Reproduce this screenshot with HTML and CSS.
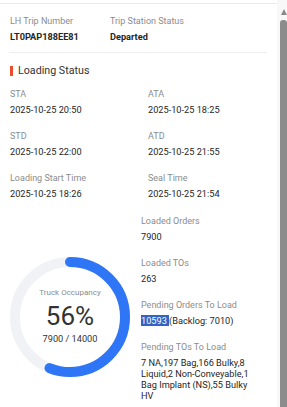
FILE: index.html
```html
<!DOCTYPE html>
<html>
<head>
<meta charset="utf-8">
<link rel="stylesheet" href="styles.css">
</head>
<body>
<div class="frame">
  <div class="panel">
    <div class="head">
      <div class="field head-first">
        <div class="label">LH Trip Number</div>
        <div class="value bold">LT0PAP188EE81</div>
      </div>
      <div class="field">
        <div class="label">Trip Station Status</div>
        <div class="value bold">Departed</div>
      </div>
    </div>
    <div class="divider"></div>
    <div class="title"><span class="mark"></span>Loading Status</div>
    <div class="grid">
      <div class="field"><div class="label">STA</div><div class="value">2025-10-25 20:50</div></div>
      <div class="field"><div class="label">ATA</div><div class="value">2025-10-25 18:25</div></div>
      <div class="field"><div class="label">STD</div><div class="value">2025-10-25 22:00</div></div>
      <div class="field"><div class="label">ATD</div><div class="value">2025-10-25 21:55</div></div>
      <div class="field"><div class="label">Loading Start Time</div><div class="value">2025-10-25 18:26</div></div>
      <div class="field"><div class="label">Seal Time</div><div class="value">2025-10-25 21:54</div></div>
    </div>
    <div class="bottom">
      <div class="gauge">
        <svg class="ring" width="120" height="120" viewBox="0 0 120 120">
          <circle cx="60" cy="60" r="55" fill="none" stroke="#f0f2f6" stroke-width="10"/>
          <circle cx="60" cy="60" r="55" fill="none" stroke="#2f76f6" stroke-width="10" stroke-linecap="round" stroke-dasharray="193.5 400" transform="rotate(-90 60 60)"/>
        </svg>
        <div class="gauge-text">
          <div class="g-label">Truck Occupancy</div>
          <div class="g-pct">56%</div>
          <div class="g-count">7900 / 14000</div>
        </div>
      </div>
      <div class="stats">
        <div class="field"><div class="label">Loaded Orders</div><div class="value">7900</div></div>
        <div class="field"><div class="label">Loaded TOs</div><div class="value">263</div></div>
        <div class="field"><div class="label">Pending Orders To Load</div><div class="value"><span class="sel">10593 </span>(Backlog: 7010)</div></div>
        <div class="field"><div class="label">Pending TOs To Load</div><div class="value wrap">7 NA,197 Bag,166 Bulky,8 Liquid,2 Non-Conveyable,1 Bag Implant (NS),55 Bulky HV</div></div>
      </div>
    </div>
  </div>
  <div class="scrollbar">
    <div class="arrow"></div>
    <div class="thumb"></div>
  </div>
</div>
</body>
</html>
```
FILE: styles.css
```css
html, body {
  margin: 0;
  padding: 0;
  background: #fff;
}
body {
  font-family: Roboto, "Noto Sans", Arial, sans-serif;
  color: #262626;
  width: 287px;
  height: 407px;
  overflow: hidden;
}
.frame {
  display: flex;
  height: 407px;
}
.panel {
  flex: 1;
  margin-top: 3px;
  border-top: 1px solid #ebebeb;
  padding: 11px 10px 0 9px;
  min-width: 0;
}
.head {
  display: flex;
  padding-left: 1px;
}
.head-first {
  width: 100px;
}
.label {
  font-size: 9px;
  line-height: 12px;
  color: #8c8c8c;
}
.value {
  font-size: 9.2px;
  line-height: 12px;
  color: #262626;
  margin-top: 4px;
}
.bold {
  font-weight: 700;
}
.divider {
  height: 1px;
  background: #eceef0;
  margin-top: 9px;
}
.title {
  display: flex;
  align-items: center;
  font-size: 10.7px;
  line-height: 14px;
  color: #333;
  margin-top: 11px;
  padding-left: 1px;
}
.mark {
  width: 3px;
  height: 10px;
  background: #ee4d2d;
  margin-right: 5px;
}
.grid {
  display: grid;
  grid-template-columns: 138px 1fr;
  row-gap: 14px;
  margin-top: 10px;
  padding-left: 1px;
}
.bottom {
  display: flex;
  margin-top: 15px;
  padding-left: 1px;
}
.gauge {
  position: relative;
  width: 120px;
  height: 120px;
  margin-top: 42px;
  margin-right: 11px;
  flex: none;
}
.ring {
  display: block;
}
.gauge-text {
  position: absolute;
  inset: 0;
  display: flex;
  flex-direction: column;
  align-items: center;
  padding-top: 30px;
}
.g-label {
  font-size: 8px;
  line-height: 11px;
  color: #8c8c8c;
}
.g-pct {
  font-size: 26px;
  line-height: 30px;
  color: #333;
  margin-top: 3px;
}
.g-count {
  font-size: 9.2px;
  line-height: 12px;
  color: #333;
  margin-top: 2px;
}
.stats {
  display: flex;
  flex-direction: column;
  gap: 14px;
  width: 120px;
}
.wrap {
  line-height: 11px;
}
.sel {
  background: #3264c8;
  color: #fff;
}
.scrollbar {
  width: 10px;
  flex: none;
  background: #f8f8f8;
  display: flex;
  flex-direction: column;
  align-items: flex-end;
}
.arrow {
  margin-top: 9px;
  width: 0;
  height: 0;
  border-left: 3.5px solid transparent;
  border-right: 3.5px solid transparent;
  border-bottom: 6px solid #8a8a8a;
}
.thumb {
  margin-top: 5px;
  width: 7px;
  flex: 1;
  background: #8c8c8c;
  border-radius: 3px 3px 0 0;
}
```
